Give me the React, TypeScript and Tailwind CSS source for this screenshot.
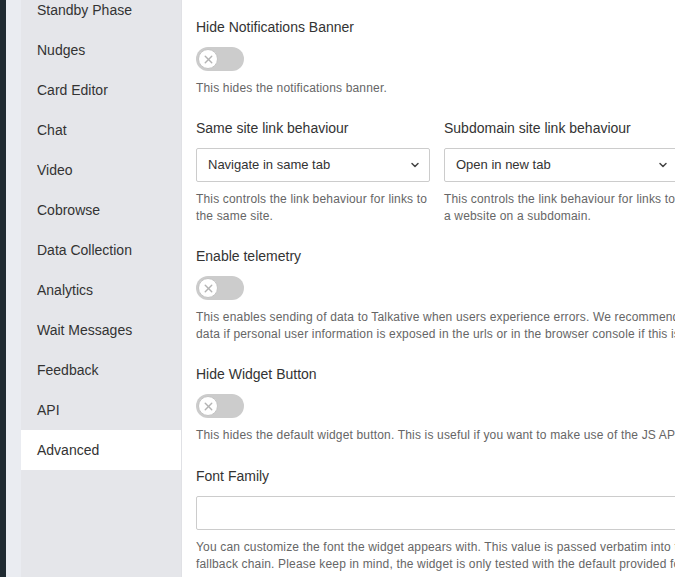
import { ChevronDown, X } from 'lucide-react'

const NAV = [
  'Standby Phase',
  'Nudges',
  'Card Editor',
  'Chat',
  'Video',
  'Cobrowse',
  'Data Collection',
  'Analytics',
  'Wait Messages',
  'Feedback',
  'API',
  'Advanced',
]

function Toggle() {
  return (
    <div className="flex items-center w-[48px] h-[24px] rounded-full bg-[#cccccc] px-[2px]">
      <div className="flex items-center justify-center w-[20px] h-[20px] rounded-full bg-white border border-[#c4c4c4]">
        <X className="w-[13px] h-[13px] text-[#b3b3b3]" strokeWidth={2.5} />
      </div>
    </div>
  )
}

function Select({ value }: { value: string }) {
  return (
    <div className="flex items-center justify-between w-[234px] h-[34px] border border-[#cccccc] rounded-[2px] pl-[11px] pr-[8px] text-[13px] text-[#333333]">
      <span>{value}</span>
      <ChevronDown className="w-[12px] h-[12px] text-[#444444]" strokeWidth={3} />
    </div>
  )
}

function Label({ children }: { children: string }) {
  return <p className="text-[14px] leading-[20px] text-[#333333] whitespace-nowrap">{children}</p>
}

function Help({ children }: { children: React.ReactNode }) {
  return <p className="mt-[9px] text-[12px] leading-[17px] tracking-[0.17px] text-[#666666] whitespace-nowrap">{children}</p>
}

export default function App() {
  return (
    <div className="flex h-[577px] w-[675px] overflow-hidden bg-white" style={{ fontFamily: '"Liberation Sans", Arial, sans-serif' }}>
      {/* app rail */}
      <div className="w-[6px] shrink-0 bg-[#1f2a31]" />
      <div className="w-[15px] shrink-0 bg-[#eaecf1]" />

      {/* settings nav */}
      <nav className="w-[161px] shrink-0 bg-[#e5e6ea] border-r border-[#e0e1e5]">
        <ul className="-mt-[10px]">
          {NAV.map((item) => (
            <li
              key={item}
              className={`h-[40px] flex items-center pl-[16px] text-[14px] text-[#333333] ${item === 'Advanced' ? 'bg-white' : ''}`}
            >
              {item}
            </li>
          ))}
        </ul>
      </nav>

      {/* form */}
      <main className="flex-1 min-w-0 overflow-hidden pl-[14px] pt-[17px]">
        <div className="w-[760px]">
          <section className="mb-[21px]">
            <Label>Hide Notifications Banner</Label>
            <div className="mt-[10px]"><Toggle /></div>
            <Help>This hides the notifications banner.</Help>
          </section>

          <div className="flex gap-[14px] mb-[21px]">
            <section className="w-[234px]">
              <Label>Same site link behaviour</Label>
              <div className="mt-[10px]"><Select value="Navigate in same tab" /></div>
              <Help>
                This controls the link behaviour for links to
                <br />
                the same site.
              </Help>
            </section>
            <section className="w-[234px]">
              <Label>Subdomain site link behaviour</Label>
              <div className="mt-[10px]"><Select value="Open in new tab" /></div>
              <Help>
                This controls the link behaviour for links to
                <br />
                a website on a subdomain.
              </Help>
            </section>
          </div>

          <section className="mb-[21px]">
            <Label>Enable telemetry</Label>
            <div className="mt-[10px]"><Toggle /></div>
            <Help>
              This enables sending of data to Talkative when users experience errors. We recommend disabling this
              <br />
              data if personal user information is exposed in the urls or in the browser console if this is a concern.
            </Help>
          </section>

          <section className="mb-[22px]">
            <Label>Hide Widget Button</Label>
            <div className="mt-[10px]"><Toggle /></div>
            <Help>This hides the default widget button. This is useful if you want to make use of the JS API to open the widget.</Help>
          </section>

          <section>
            <Label>Font Family</Label>
            <div className="mt-[10px] h-[34px] w-[600px] border border-[#cccccc] rounded-[2px]" />
            <Help>
              You can customize the font the widget appears with. This value is passed verbatim into the CSS font-family property, so you can provide a
              <br />
              fallback chain. Please keep in mind, the widget is only tested with the default provided font.
            </Help>
          </section>
        </div>
      </main>
    </div>
  )
}
